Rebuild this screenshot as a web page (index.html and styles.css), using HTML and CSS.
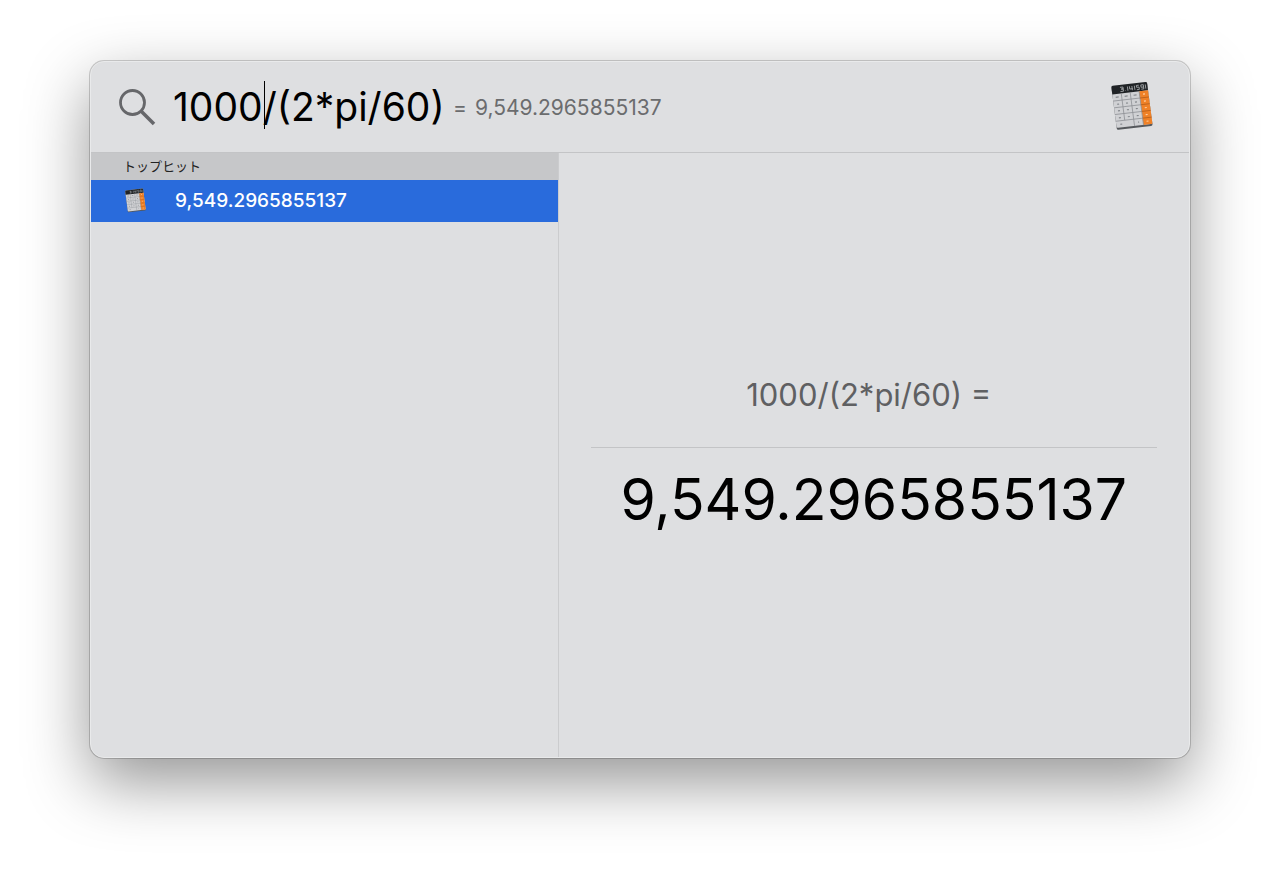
FILE: index.html
```html
<!DOCTYPE html>
<html lang="ja">
<head>
<meta charset="utf-8">
<meta name="viewport" content="width=device-width, initial-scale=1">
<title>Spotlight</title>
<link rel="stylesheet" href="styles.css">
</head>
<body>
<svg class="symbols" aria-hidden="true">
  <symbol id="calculator" viewBox="0 0 48 56">
    <g transform="translate(-1 1) scale(1 .94) rotate(-7 24 28)">
      <rect x="6" y="5" width="36" height="46" rx="1.5" fill="#55585c"/>
      <rect x="6" y="4" width="36" height="45" rx="1.5" fill="#d0d1d4"/>
      <path d="M6 13V5.500Q6 4 7.500 4h33Q42 4 42 5.500V13z" fill="#202326"/>
      <path d="M33 13h9v36h-9z" fill="#ef8127"/>
      <path d="M6 20.200h27M6 27.400h27M6 34.600h27M6 41.800h27M15 13v28.800M24 13v36M33 13v36" stroke="#8e9196" stroke-width=".8"/>
      <path d="M33 20.200h9M33 27.400h9M33 34.600h9M33 41.800h9" stroke="#b65d1a" stroke-width=".8"/>
      <path d="M9 16.500h3M18 16.500h3M27 16.500h3M9.500 24h2M18.500 24h2M27.500 24h2M9.500 31h2M18.500 31h2M27.500 31h2M9.500 38.500h2M18.500 38.500h2M27.500 38.500h2M10 45.500h2M28 45.500h1" stroke="#85888d" stroke-width="1.300"/>
      <path d="M36.500 16.500h2M36.500 24h2M36.500 31h2M36.500 38.500h2M36.500 45.500h2" stroke="#ffd0a1" stroke-width="1.200"/>
      <path d="M14.500 6.500h3v2h-2 2v2.500h-3M19.500 10.500v.5M22 6.500V11M24 6.500v3h3M26.500 6.500V11M29 6.500V11M33.500 6.500h-2.500v2h2.500V11H31M38 9h-2.500V6.500H38V11h-2.500M40 6.500V11" fill="none" stroke="#b0b4b7" stroke-width=".8"/>
    </g>
  </symbol>
</svg>
<main class="spotlight">
  <header class="search">
    <svg class="search-icon" viewBox="0 0 38 38" aria-hidden="true">
      <circle cx="14.500" cy="14.500" r="12" fill="none" stroke="#66676a" stroke-width="2.800"/>
      <path d="M23 23L36 36" stroke="#66676a" stroke-width="3.500"/>
    </svg>
    <div class="query">
      <input class="query-input" type="text" aria-label="Spotlight検索" value="1000/(2*pi/60)">
      <span class="caret"></span>
    </div>
    <output class="inline-result"><span>=</span><span>9,549.2965855137</span></output>
    <svg class="app-icon" aria-hidden="true"><use href="#calculator"/></svg>
  </header>
  <div class="panes">
    <section class="results">
      <h2 class="group-title">トップヒット</h2>
      <button class="result" type="button">
        <svg class="result-icon" aria-hidden="true"><use href="#calculator"/></svg>
        <span>9,549.2965855137</span>
      </button>
    </section>
    <section class="preview">
      <p class="expression">1000/(2*pi/60) =</p>
      <p class="answer">9,549.2965855137</p>
    </section>
  </div>
</main>
</body>
</html>
```
FILE: styles.css
```css
* {
  box-sizing: border-box;
}

body {
  display: flex;
  min-height: 100vh;
  margin: 0;
  padding: 61px 90px 120px;
  background: #fff;
  color: #000;
  font-family: Inter, "Noto Sans CJK JP", sans-serif;
}

.symbols {
  position: absolute;
  width: 0;
  height: 0;
}

.spotlight {
  display: flex;
  flex: 1;
  flex-direction: column;
  min-width: 0;
  overflow: hidden;
  border: 1px solid #e9eaeb;
  border-radius: 14px;
  background: #dedfe1;
  box-shadow: 0 0 0 1px rgba(0, 0, 0, .18), 0 24px 64px rgba(0, 0, 0, .42);
}

.search {
  display: flex;
  align-items: center;
  height: 91px;
  padding: 0 32px 0 27px;
  border-bottom: 1px solid #c3c4c6;
}

.search-icon {
  flex: none;
  width: 38px;
  height: 38px;
}

.query {
  position: relative;
  margin-left: 17px;
}

.query-input {
  display: block;
  width: 272px;
  height: 56px;
  padding: 0 0 2px;
  border: 0;
  outline: 0;
  background: transparent;
  color: #000;
  font: 400 39px/54px Inter, sans-serif;
}

.caret {
  position: absolute;
  top: 2px;
  left: 91px;
  width: 1px;
  height: 48px;
  background: #000;
}

.inline-result {
  display: flex;
  gap: 8px;
  margin-left: 8px;
  padding-top: 2px;
  color: #6b6c6e;
  font-size: 21px;
  line-height: 28px;
}

.app-icon {
  flex: none;
  width: 48px;
  height: 56px;
  margin-left: auto;
}

.panes {
  display: grid;
  flex: 1;
  grid-template-columns: 468fr 631fr;
}

.results {
  border-right: 1px solid #cbccce;
}

.group-title {
  margin: 0;
  padding-left: 32px;
  background: #c6c7c9;
  color: #222;
  font-size: 13px;
  font-weight: 400;
  line-height: 27px;
}

.result {
  display: flex;
  align-items: center;
  gap: 26px;
  width: 100%;
  height: 42px;
  padding: 0 32px;
  border: 0;
  background: #296bdc;
  color: #fff;
  font: 500 19px/28px Inter, sans-serif;
}

.result-icon {
  width: 26px;
  height: 28px;
}

.preview {
  display: flex;
  flex-direction: column;
  justify-content: center;
  padding: 0 32px;
  text-align: center;
}

.expression {
  margin: 0;
  padding: 0 10px 32px 0;
  border-bottom: 1px solid #c3c4c6;
  color: #5f6062;
  font-size: 31px;
  line-height: 40px;
}

.answer {
  margin: 0;
  padding-top: 16px;
  font-size: 57px;
  line-height: 72px;
}
```
